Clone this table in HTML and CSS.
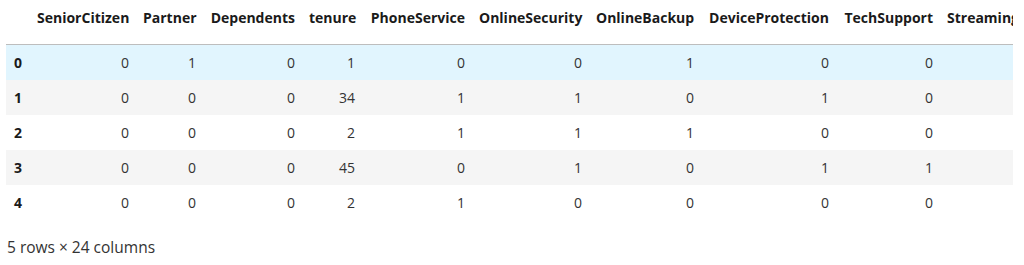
FILE: index.html
```html
<!DOCTYPE html>
<html>
<head>
<meta charset="utf-8">
<link rel="stylesheet" href="styles.css">
</head>
<body>
<div class="frame">
  <table class="df">
    <colgroup>
      <col class="c-idx"><col class="c1"><col class="c2"><col class="c3"><col class="c4"><col class="c5"><col class="c6"><col class="c7"><col class="c8"><col class="c9"><col class="c10">
    </colgroup>
    <thead>
      <tr>
        <th></th><th>SeniorCitizen</th><th>Partner</th><th>Dependents</th><th>tenure</th><th>PhoneService</th><th>OnlineSecurity</th><th>OnlineBackup</th><th>DeviceProtection</th><th>TechSupport</th><th>StreamingTV</th>
      </tr>
    </thead>
    <tbody>
      <tr class="hover"><th>0</th><td>0</td><td>1</td><td>0</td><td>1</td><td>0</td><td>0</td><td>1</td><td>0</td><td>0</td><td>0</td></tr>
      <tr><th>1</th><td>0</td><td>0</td><td>0</td><td>34</td><td>1</td><td>1</td><td>0</td><td>1</td><td>0</td><td>0</td></tr>
      <tr><th>2</th><td>0</td><td>0</td><td>0</td><td>2</td><td>1</td><td>1</td><td>1</td><td>0</td><td>0</td><td>0</td></tr>
      <tr><th>3</th><td>0</td><td>0</td><td>0</td><td>45</td><td>0</td><td>1</td><td>0</td><td>1</td><td>1</td><td>0</td></tr>
      <tr><th>4</th><td>0</td><td>0</td><td>0</td><td>2</td><td>1</td><td>0</td><td>0</td><td>0</td><td>0</td><td>0</td></tr>
    </tbody>
  </table>
</div>
<p class="caption">5 rows × 24 columns</p>
</body>
</html>
```
FILE: styles.css
```css
html, body {
  margin: 0;
  padding: 0;
  background: #fff;
}
body {
  font-family: "Open Sans", "Noto Sans", sans-serif;
  font-size: 14px;
  color: #333;
}
.frame {
  margin-left: 6px;
  width: 1007px;
  overflow: hidden;
}
.df {
  border-collapse: collapse;
  border-spacing: 0;
  table-layout: fixed;
  width: 1034px;
  white-space: nowrap;
}
.c-idx { width: 24px; }
.c1 { width: 106px; }
.c2 { width: 67px; }
.c3 { width: 99px; }
.c4 { width: 60px; }
.c5 { width: 110px; }
.c6 { width: 117px; }
.c7 { width: 112px; }
.c8 { width: 135px; }
.c9 { width: 104px; }
.c10 { width: 100px; }
.df thead th {
  height: 44px;
  box-sizing: border-box;
  padding: 8px 7px 16px;
  vertical-align: middle;
  text-align: right;
  font-weight: 700;
  color: #1a1a1a;
  border-bottom: 1px solid #bdbdbd;
  line-height: 20px;
}
.df tbody tr {
  height: 35px;
}
.df tbody th,
.df tbody td {
  padding: 2px 7px 0;
  line-height: 20px;
  vertical-align: middle;
  text-align: right;
}
.df tbody th {
  text-align: left;
  font-weight: 700;
  color: #1a1a1a;
  padding-left: 8px;
}
.df tbody tr:nth-child(even) {
  background: #f5f5f5;
}
.df tbody tr.hover {
  background: #e1f5fe;
}
.caption {
  margin: 16px 0 0 7px;
  line-height: 22px;
  font-size: 15.5px;
  color: #333;
}
```
